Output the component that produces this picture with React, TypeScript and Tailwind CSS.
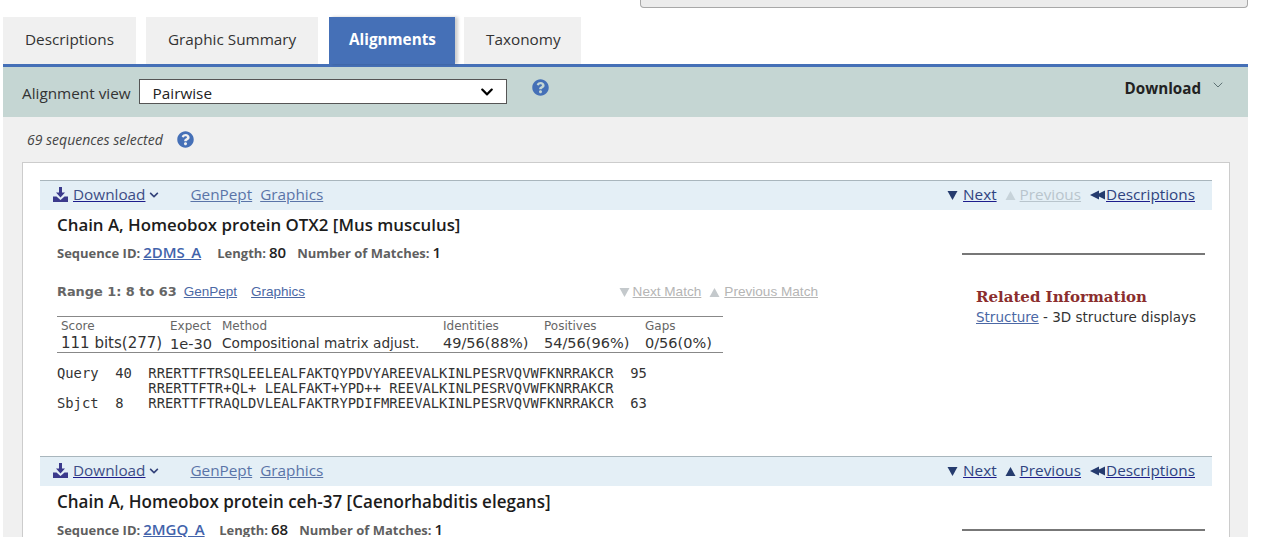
import { ChevronDown } from "lucide-react";
import { FaChevronDown, FaQuestionCircle } from "react-icons/fa";

const ui = "font-['Open_Sans','Noto_Sans',sans-serif]";
const verdana = "font-['DejaVu_Sans',sans-serif]";
const arial = "font-['Liberation_Sans',Arial,sans-serif]";

const tabs = [
  { label: "Descriptions", box: "w-[133px] pl-[22px]" },
  { label: "Graphic Summary", box: "ml-[10px] w-[172px] pl-[22px]" },
  { label: "Alignments", box: "ml-[11px] w-[126px] pl-[20px]", active: true },
  { label: "Taxonomy", box: "ml-[9px] w-[117px] pl-[22px]" },
];

function DownloadIcon() {
  return (
    <svg width="15" height="15" viewBox="0 0 15 15" className="shrink-0">
      <path d="M6 0h3v5.5h3L7.5 10.5 3 5.5h3z" fill="#3b3a8c" />
      <path d="M0 9.5h3.5L7.5 13l4-3.5H15V15H0z" fill="#3b3a8c" />
    </svg>
  );
}

function Triangle({ dir, color }: { dir: "up" | "down"; color: string }) {
  return (
    <svg width="11" height="10" viewBox="0 0 11 10" className="shrink-0">
      <path d={dir === "down" ? "M0.5 1h10L5.5 10z" : "M0.5 10h10L5.5 1z"} fill={color} />
    </svg>
  );
}

function DoubleLeft() {
  return (
    <svg width="16" height="10" viewBox="0 0 16 10" className="shrink-0">
      <path d="M0 5l9-4.5v9z" fill="#253b6e" />
      <path d="M6 5l9-4.5v9z" fill="#253b6e" />
    </svg>
  );
}

function HitHeader({ prevEnabled }: { prevEnabled: boolean }) {
  return (
    <div className={`${ui} flex h-[30px] items-center border-t border-[#a9b6bd] bg-[#e4eff6] pb-[2px] pl-[13px] pr-[17px] text-[15.3px]`}>
      <DownloadIcon />
      <a className="ml-[5px] text-[#3d4d86] underline decoration-[#1d1d8c]">Download</a>
      <FaChevronDown className="ml-[4px] text-[10px] text-[#33427a]" />
      <a className="ml-[31px] text-[#5a74a8] underline decoration-[#5a74a8]">GenPept</a>
      <a className="ml-[8px] text-[#5a74a8] underline decoration-[#5a74a8]">Graphics</a>
      <div className="ml-auto flex items-center">
        <Triangle dir="down" color="#253b6e" />
        <a className="ml-[5px] text-[#2f4380] underline decoration-[#1d1d8c]">Next</a>
        <span className="ml-[8px]">
          <Triangle dir="up" color={prevEnabled ? "#253b6e" : "#c7d3da"} />
        </span>
        <a
          className={
            prevEnabled
              ? "ml-[4px] text-[#2f4380] underline decoration-[#1d1d8c]"
              : "ml-[4px] text-[#b9c5cd] underline decoration-[#b9c5cd]"
          }
        >
          Previous
        </a>
        <span className="ml-[9px]">
          <DoubleLeft />
        </span>
        <a className="text-[#2f4380] underline decoration-[#1d1d8c]">Descriptions</a>
      </div>
    </div>
  );
}

function HitTitle({
  title,
  titleSize,
  id,
  length,
  idWidth,
}: {
  title: string;
  titleSize: string;
  id: string;
  length: string;
  idWidth: string;
}) {
  return (
    <div className={`${ui} pl-[17px]`}>
      <h2 className={`mt-[2px] h-[26px] ${titleSize} leading-[26px] font-semibold text-[#1c1c1c]`}>{title}</h2>
      <div className="mt-[3px] flex h-[23px] items-baseline text-[13px] font-bold text-[#5f5f5f]">
        <span>Sequence ID:</span>
        <a className={`ml-[3px] ${idWidth} text-[15px] font-semibold text-[#4263ab] underline`}>{id}</a>
        <span>Length:</span>
        <span className="ml-[3px] text-[15px] font-semibold text-[#222]">{length}</span>
        <span className="ml-[11px]">Number of Matches:</span>
        <span className="ml-[3px] text-[15px] font-semibold text-[#222]">1</span>
      </div>
    </div>
  );
}

const scoreCols = [
  { w: "w-[109px]", size: "text-[15px]", head: "Score", value: "111 bits(277)" },
  { w: "w-[52px]", size: "text-[14.6px]", head: "Expect", value: "1e-30" },
  { w: "w-[221px]", size: "text-[13.7px]", head: "Method", value: "Compositional matrix adjust." },
  { w: "w-[101px]", size: "text-[14.5px]", head: "Identities", value: "49/56(88%)" },
  { w: "w-[101px]", size: "text-[14.5px]", head: "Positives", value: "54/56(96%)" },
  { w: "w-[78px]", size: "text-[14.5px]", head: "Gaps", value: "0/56(0%)" },
];

const alignment = `Query  40  RRERTTFTRSQLEELEALFAKTQYPDVYAREEVALKINLPESRVQVWFKNRRAKCR  95
           RRERTTFTR+QL+ LEALFAKT+YPD++ REEVALKINLPESRVQVWFKNRRAKCR
Sbjct  8   RRERTTFTRAQLDVLEALFAKTRYPDIFMREEVALKINLPESRVQVWFKNRRAKCR  63`;

export default function App() {
  return (
    <div className="h-[537px] w-[1274px] overflow-hidden bg-white">
      <div className="ml-[640px] h-[8px] w-[608px] rounded-b-[4px] border border-t-0 border-[#a8a8a8] bg-[#ececec]" />

      <div className={`${ui} ml-[3px] mt-[9px] flex h-[47px] w-[1245px] items-stretch text-[15.3px]`}>
        {tabs.map((tab) => (
          <div
            key={tab.label}
            className={
              tab.active
                ? `${tab.box} bg-[#4570b7] font-bold leading-[45px] text-white shadow-[3px_0_3px_rgba(0,0,0,0.2)]`
                : `${tab.box} bg-[#f0f0f0] leading-[45px] text-[#333]`
            }
          >
            {tab.label}
          </div>
        ))}
      </div>

      <div className="ml-[3px] h-[473px] w-[1245px] border-t-[3px] border-[#4570b7] bg-[#f0f0f0]">
        <div className={`${ui} flex h-[50px] items-start bg-[#c5d6d3] pl-[19px] pr-[22px] text-[15.3px] text-[#333]`}>
          <span className="mt-[15px] leading-[22px]">Alignment view</span>
          <div className="ml-[8px] mt-[12px] flex h-[25px] w-[368px] items-center justify-between border border-[#555] bg-white pl-[13px] pr-[12px] pt-[3px] text-[#222]">
            <span>Pairwise</span>
            <FaChevronDown className="-mt-[3px] text-[14px] text-black" />
          </div>
          <FaQuestionCircle className="ml-[25px] mt-[12px] text-[17px] text-[#4570b7]" />
          <span className="ml-auto mt-[10px] text-[15.2px] leading-[22px] font-bold text-[#222]">Download</span>
          <ChevronDown size={16} strokeWidth={1.5} className="ml-[9px] mt-[10px] text-[#5f7375]" />
        </div>

        <div className={`${ui} flex h-[45px] items-center pl-[24px] text-[14px] italic text-[#444]`}>
          <span>69 sequences selected</span>
          <FaQuestionCircle className="ml-[14px] text-[17px] not-italic text-[#4570b7]" />
        </div>

        <div className="ml-[19px] h-[400px] w-[1208px] border border-[#ccc] bg-white pl-[17px] pr-[17px] pt-[17px]">
          <HitHeader prevEnabled={false} />

          <div className="flex h-[246px]">
            <div className="w-[900px]">
              <HitTitle
                title="Chain A, Homeobox protein OTX2 [Mus musculus]"
                titleSize="text-[16.85px]"
                id="2DMS_A"
                length="80"
                idWidth="w-[74px]"
              />

              <div className="ml-[17px] mt-[16px] flex h-[24px] w-[761px] items-center">
                <span className={`${verdana} text-[12.9px] font-bold text-[#666]`}>Range 1: 8 to 63</span>
                <a className={`${arial} ml-[7px] text-[13.5px] text-[#4b68a5] underline`}>GenPept</a>
                <a className={`${arial} ml-[14px] text-[13.5px] text-[#4b68a5] underline`}>Graphics</a>
                <div className={`${arial} ml-auto flex items-center text-[13.6px] text-[#b5b5b5]`}>
                  <Triangle dir="down" color="#c4c9cc" />
                  <a className="ml-[3px] underline">Next Match</a>
                  <span className="ml-[8px]">
                    <Triangle dir="up" color="#c4c9cc" />
                  </span>
                  <a className="ml-[4px] underline">Previous Match</a>
                </div>
              </div>

              <div className={`${verdana} ml-[17px] mt-[12px] flex h-[37px] w-[666px] border-y border-[#888] text-[#333]`}>
                {scoreCols.map((col) => (
                  <div key={col.head} className={`${col.w} pl-[4px]`}>
                    <div className="mt-[1px] h-[17px] text-[12px] leading-[17px] text-[#666]">{col.head}</div>
                    <div className={`${col.size} leading-[17px]`}>{col.value}</div>
                  </div>
                ))}
              </div>

              <pre className="ml-[17px] mt-[13px] font-['DejaVu_Sans_Mono',monospace] text-[13.8px] leading-[15px] text-[#333]">
                {alignment}
              </pre>
            </div>

            <div className="ml-[22px] flex-1 pr-[7px]">
              <div className="mt-[43px] h-[2px] bg-[#777]" />
              <div className={`${verdana} ml-[14px] mt-[33px]`}>
                <div className="font-['DejaVu_Serif',serif] text-[15px] leading-[19px] font-bold text-[#8b2e2e]">
                  Related Information
                </div>
                <div className="mt-[1px] text-[13.5px] leading-[18px] text-[#333]">
                  <a className="text-[#4b68a5] underline">Structure</a> - 3D structure displays
                </div>
              </div>
            </div>
          </div>

          <HitHeader prevEnabled={true} />
          <div className="flex">
            <div className="w-[900px] pt-[1px]">
              <HitTitle
                title="Chain A, Homeobox protein ceh-37 [Caenorhabditis elegans]"
                titleSize="text-[17.05px]"
                id="2MGQ_A"
                length="68"
                idWidth="w-[76px]"
              />
            </div>
            <div className="ml-[22px] flex-1 pr-[7px]">
              <div className="mt-[43px] h-[2px] bg-[#777]" />
            </div>
          </div>
        </div>
      </div>
    </div>
  );
}
